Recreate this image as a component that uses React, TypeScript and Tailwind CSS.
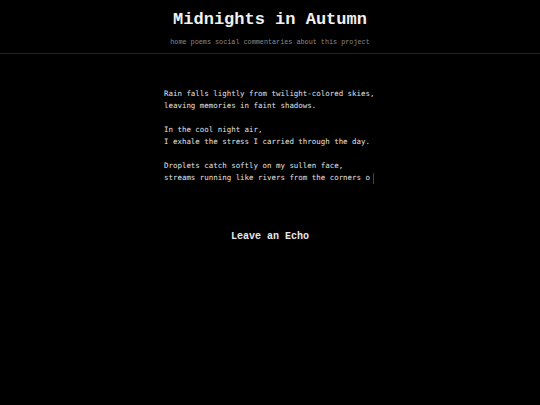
import React from "react";

const poem = [
  "Rain falls lightly from twilight-colored skies,",
  "leaving memories in faint shadows.",
  "",
  "In the cool night air,",
  "I exhale the stress I carried through the day.",
  "",
  "Droplets catch softly on my sullen face,",
];

export default function App() {
  return (
    <div className="w-[540px] h-[405px] bg-black text-[#e5e5e5] overflow-hidden">
      <header className="border-b border-[#222] pb-[6px] flex flex-col items-center">
        <h1 className="pt-[10px] text-[17px] leading-[20px] font-bold text-[#f0f0f0] [font-family:'Liberation_Mono',monospace]">
          Midnights in Autumn
        </h1>
        <nav className="mt-[7px] flex gap-[4px] text-[6.8px] leading-[10px] text-[#8a8a8a] [font-family:'Liberation_Mono',monospace]">
          <span>home</span>
          <span>poems</span>
          <span>social</span>
          <span>commentaries</span>
          <span>about</span>
          <span>this</span>
          <span>project</span>
        </nav>
      </header>
      <main className="flex flex-col items-center">
        <div className="mt-[34px] w-[212px] text-[7.45px] leading-[12px] text-[#e0e0e0] [font-family:'DejaVu_Sans_Mono',monospace] whitespace-pre">
          {poem.map((l, i) => (
            <div key={i} className="h-[12px]">{l}</div>
          ))}
          <div className="h-[12px] flex items-center">
            <span>streams running like rivers from the corners o</span>
            <span className="ml-[3px] w-[1px] h-[11px] bg-[#444]"></span>
          </div>
        </div>
        <h2 className="mt-[46px] text-[10px] leading-[14px] font-bold text-[#e8e8e8] [font-family:'Liberation_Mono',monospace]">
          Leave an Echo
        </h2>
      </main>
    </div>
  );
}
